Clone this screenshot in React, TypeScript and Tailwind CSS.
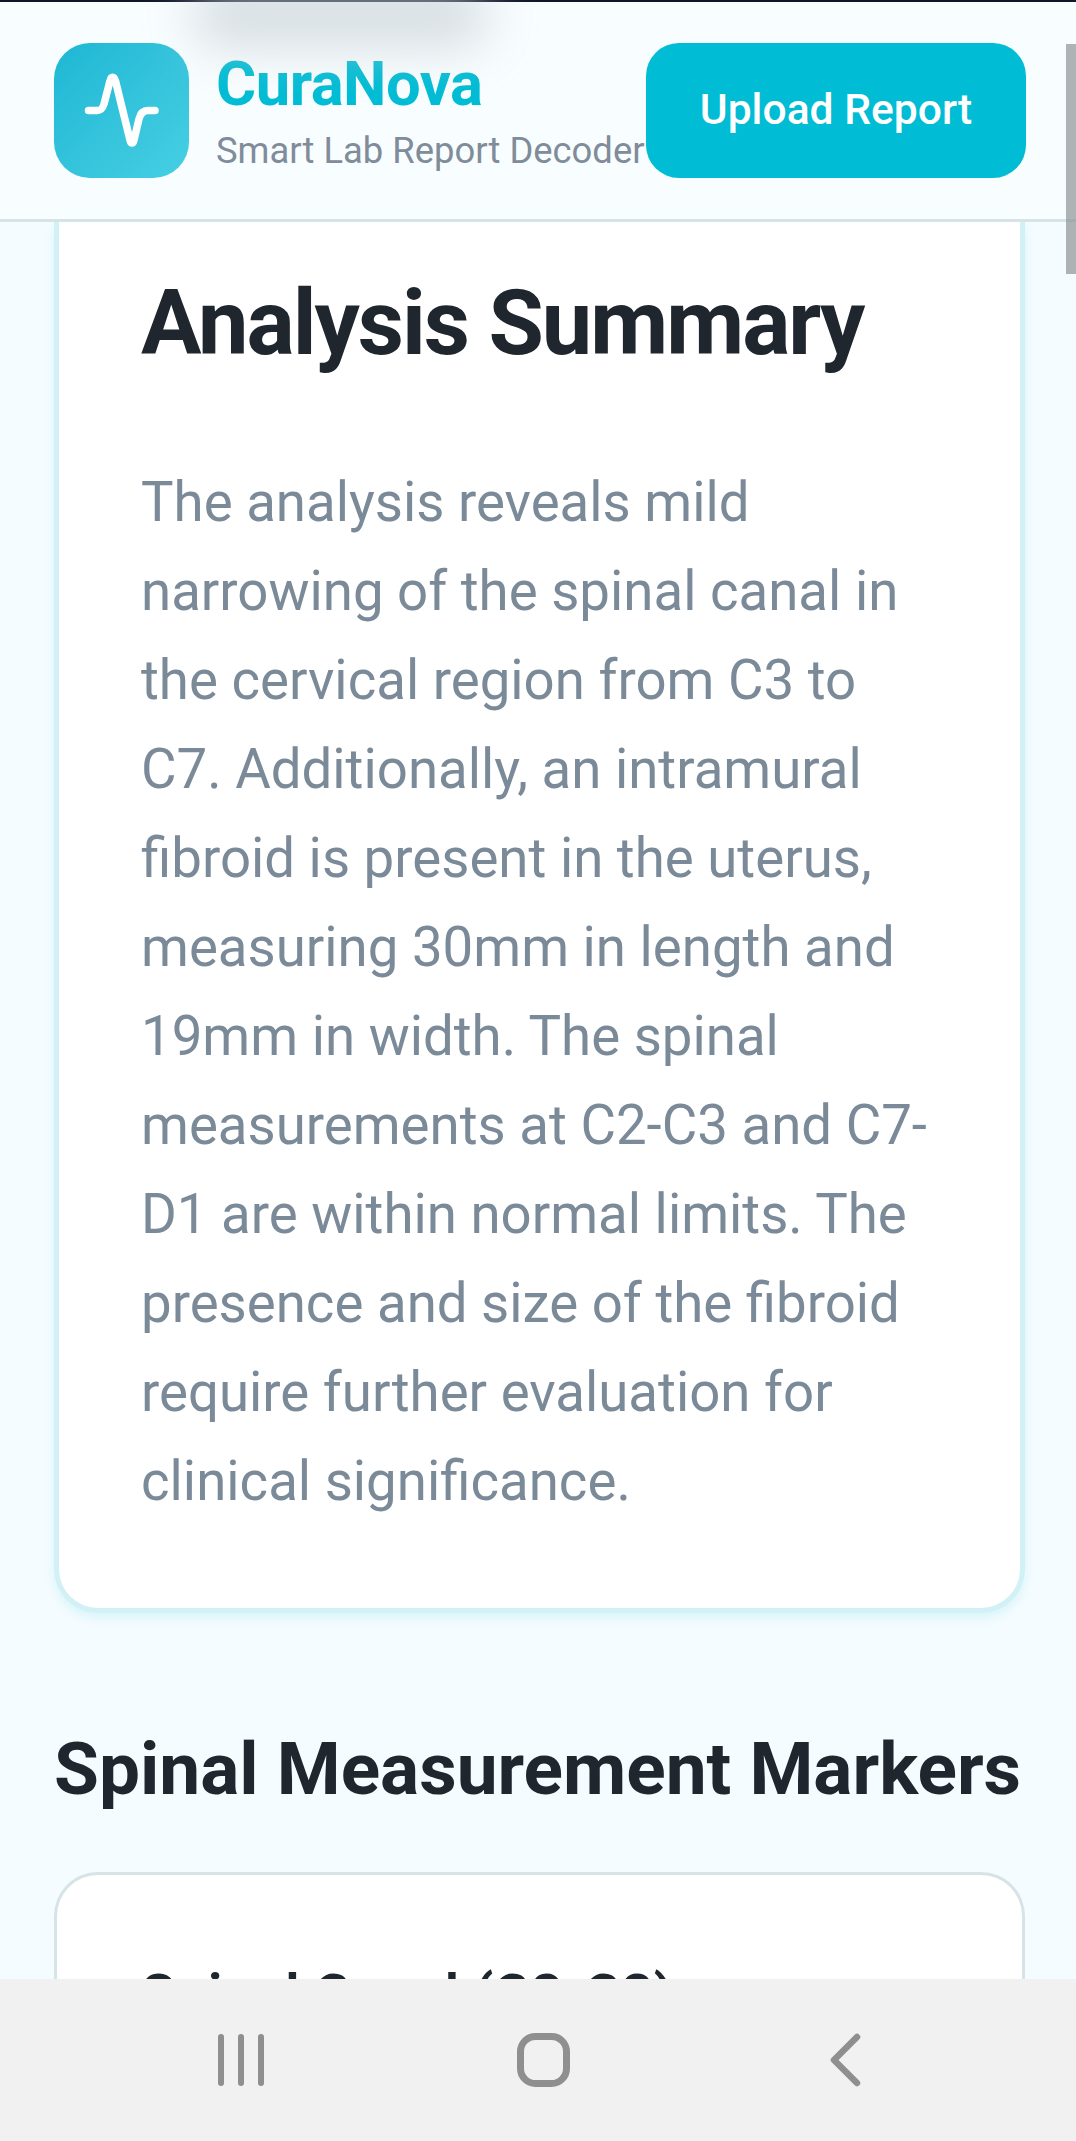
const summary =
  "The analysis reveals mild narrowing of the spinal canal in the cervical region from C3 to C7. Additionally, an intramural fibroid is present in the uterus, measuring 30mm in length and 19mm in width. The spinal measurements at C2-C3 and C7-D1 are within normal limits. The presence and size of the fibroid require further evaluation for clinical significance.";

function Header() {
  return (
    <header className="relative z-10 flex h-[220px] shrink-0 items-start justify-between border-b-[3px] border-[#d6e4e7] bg-[#f8fdff] pl-[54px] pr-[50px] pt-[41px]">
      <div className="flex items-start">
        <div className="flex h-[135px] w-[135px] shrink-0 items-center justify-center rounded-[36px] bg-gradient-to-br from-[#1cb7d4] to-[#45cfe3]">
          <svg width="135" height="135" viewBox="0 0 135 135" fill="none">
            <path
              d="M34.5 67.5H43C47 67.5 48.5 66 50 61L56 38C57 33 60 33 61.5 38L76 97C77 101 79 101 80 97L85 76C86.5 70 90 67.5 94 67.5H101"
              stroke="white"
              strokeWidth="7.5"
              strokeLinecap="round"
              strokeLinejoin="round"
            />
          </svg>
        </div>
        <div className="ml-[27px] whitespace-nowrap">
          <div className="mt-[9px] text-[61.5px] leading-[64px] font-bold tracking-[-0.5px] text-[#00bcd4]">
            CuraNova
          </div>
          <div className="mt-[13px] text-[36.4px] leading-[44px] text-[#808c99]">
            Smart Lab Report Decoder
          </div>
        </div>
      </div>
      <button className="h-[135px] w-[380px] shrink-0 rounded-[33px] bg-[#00bcd4] pb-[2px] text-[42.6px] font-medium text-white">
        Upload Report
      </button>
    </header>
  );
}

function NavBar() {
  return (
    <nav className="relative z-10 flex h-[162px] shrink-0 items-start bg-[#f1f1f1] pl-[218px] pt-[54px]">
      <svg width="50" height="54" viewBox="0 0 50 54" fill="none">
        <path
          d="M3 4V50M23 4V50M43 4V50"
          stroke="#8f8f8f"
          strokeWidth="6"
          strokeLinecap="round"
        />
      </svg>
      <svg className="ml-[249px]" width="54" height="54" viewBox="0 0 54 54" fill="none">
        <rect x="3.5" y="3.5" width="46" height="47" rx="15" stroke="#8f8f8f" strokeWidth="7" />
      </svg>
      <svg className="ml-[257px]" width="34" height="54" viewBox="0 0 34 54" fill="none">
        <path
          d="M29 4L6 27L29 50"
          stroke="#8f8f8f"
          strokeWidth="6.5"
          strokeLinecap="round"
          strokeLinejoin="round"
        />
      </svg>
    </nav>
  );
}

export default function App() {
  return (
    <div className="relative flex h-[2141px] w-[1076px] flex-col overflow-hidden bg-[#f5fcff] font-['Roboto',sans-serif]">
      <div className="relative z-10 h-[2px] shrink-0 bg-[#0f172a]" />
      {/* notification blur left over from the capture */}
      <div className="absolute left-[190px] top-[-20px] z-20 h-[70px] w-[300px] rounded-full bg-[#c4ccd2] opacity-60 blur-xl" />
      <Header />
      {/* scrollbar thumb */}
      <div className="absolute right-0 top-[44px] z-20 h-[230px] w-[10px] bg-[#8f9396] opacity-70" />
      <main className="min-h-0 flex-1 overflow-hidden pl-[54px] pr-[51px]">
        <section className="rounded-b-[44px] border-x-[5px] border-b-[5px] border-[#d2f1f7] bg-white pb-[82px] pl-[82px] pr-[79px] pt-[57px] shadow-[0_5px_12px_rgba(0,188,212,0.12)]">
          <h2 className="text-[90px] leading-[90px] font-bold tracking-[-2px] whitespace-nowrap text-[#20262e]">
            Analysis Summary
          </h2>
          <p className="mt-[89px] text-[54.6px] leading-[89px] text-[#7b8a98]">{summary}</p>
        </section>
        <h2 className="mt-[116px] text-[73px] leading-[80px] font-bold whitespace-nowrap text-[#20262e]">
          Spinal Measurement Markers
        </h2>
        <section className="mt-[63px] rounded-t-[44px] border-x-[3px] border-t-[3px] border-[#d6e4e7] bg-white pb-[100px] pl-[84px] pt-[88px]">
          <h3 className="text-[57px] leading-[66px] font-semibold text-[#20262e]">
            Spinal Canal (C2-C3)
          </h3>
        </section>
      </main>
      <NavBar />
    </div>
  );
}
